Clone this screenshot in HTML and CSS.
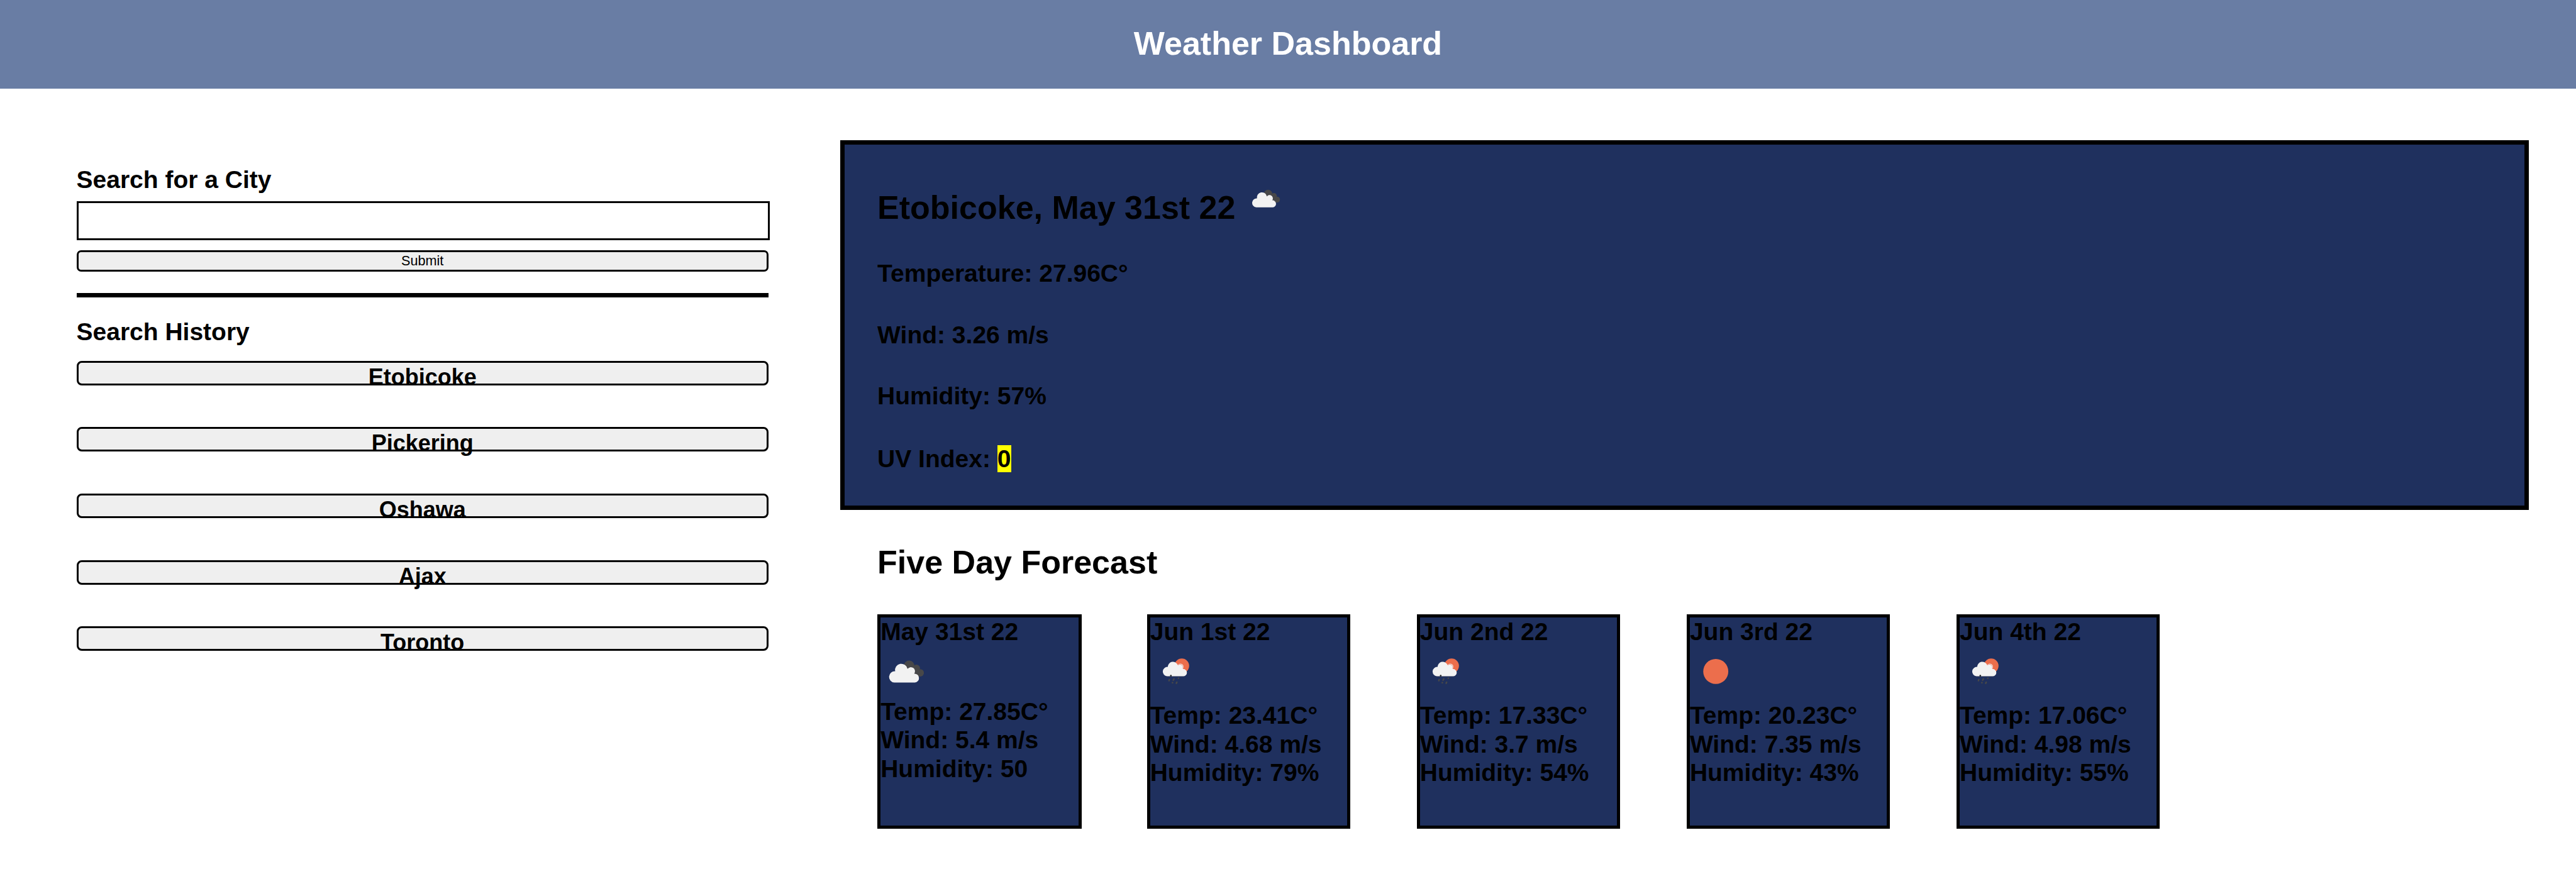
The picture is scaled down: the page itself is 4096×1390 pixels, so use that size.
FILE: index.html
```html
<!DOCTYPE html>
<html lang="en">
<head>
<meta charset="utf-8">
<title>Weather Dashboard</title>
<link rel="stylesheet" href="styles.css">
</head>
<body>
<svg class="sprite" aria-hidden="true">
  <symbol id="clouds" viewBox="0 0 300 300">
    <g fill="#484849"><circle cx="168" cy="118" r="31"/><circle cx="211" cy="132" r="21"/><circle cx="233" cy="159" r="22"/><path d="M150 130L190 110L240 150L230 181L200 175Z"/></g>
    <path d="M81 216a33 33 0 0 1 5-66a37 37 0 0 1 73-14a24 24 0 0 1 39 28a26 26 0 0 1 4 52z" fill="#f2f2f2" stroke="#2c2c36" stroke-width="3" stroke-linejoin="round" clip-path="url(#edge)"/>
    <path d="M81 216a33 33 0 0 1 5-66a37 37 0 0 1 73-14a24 24 0 0 1 39 28a26 26 0 0 1 4 52z" fill="#f2f2f2"/>
  </symbol>
  <clipPath id="edge"><path d="M142 100H215V163H142Z"/></clipPath>
  <symbol id="rain" viewBox="0 0 300 300">
    <circle cx="185" cy="118" r="43" fill="#ec6e4c"/>
    <path d="M99 179a27 27 0 0 1 4-55a30 30 0 0 1 58-11a19 19 0 0 1 31 23a21 21 0 0 1 3 43z" fill="#f2f2f2"/>
    <path d="M162 113a19 19 0 0 1 30 21a21 21 0 0 1 20 12" fill="none" stroke="#f04e30" stroke-width="2"/>
    <path d="M99 179H196" stroke="#8a8a90" stroke-width="2"/>
    <path d="M112 199L110 205M139 195L135 202M166 190L165 191M130 217L131 217M156 214L153 220" fill="none" stroke="#484849" stroke-width="9" stroke-linecap="round"/>
    <circle cx="121" cy="176" r="5" fill="#222"/>
  </symbol>
  <symbol id="sun" viewBox="0 0 300 300"><circle cx="152" cy="151" r="73.5" fill="#ec6e4c"/></symbol>
</svg>
<header class="header"><h1>Weather Dashboard</h1></header>
<main class="layout">
  <aside class="sidebar">
    <h2 class="label">Search for a City</h2>
    <input class="city" type="text" aria-label="City">
    <button class="submit">Submit</button>
    <div class="rule"></div>
    <h2 class="label">Search History</h2>
    <ul class="history">
      <li>Etobicoke</li>
      <li>Pickering</li>
      <li>Oshawa</li>
      <li>Ajax</li>
      <li>Toronto</li>
    </ul>
  </aside>
  <section class="content">
    <div class="current">
      <h2>Etobicoke, May 31st 22 <svg class="now-icon"><use href="#clouds"/></svg></h2>
      <p>Temperature: 27.96C°</p>
      <p>Wind: 3.26 m/s</p>
      <p>Humidity: 57%</p>
      <p>UV Index: <span class="uv">0</span></p>
    </div>
    <h2 class="forecast-title">Five Day Forecast</h2>
    <div class="forecast">
      <article class="card tight"><p>May 31st 22</p><svg><use href="#clouds"/></svg><p>Temp: 27.85C°</p><p>Wind: 5.4 m/s</p><p>Humidity: 50</p></article>
      <article class="card"><p>Jun 1st 22</p><svg><use href="#rain"/></svg><p>Temp: 23.41C°</p><p>Wind: 4.68 m/s</p><p>Humidity: 79%</p></article>
      <article class="card"><p>Jun 2nd 22</p><svg><use href="#rain"/></svg><p>Temp: 17.33C°</p><p>Wind: 3.7 m/s</p><p>Humidity: 54%</p></article>
      <article class="card"><p>Jun 3rd 22</p><svg><use href="#sun"/></svg><p>Temp: 20.23C°</p><p>Wind: 7.35 m/s</p><p>Humidity: 43%</p></article>
      <article class="card"><p>Jun 4th 22</p><svg><use href="#rain"/></svg><p>Temp: 17.06C°</p><p>Wind: 4.98 m/s</p><p>Humidity: 55%</p></article>
    </div>
  </section>
</main>
</body>
</html>
```
FILE: styles.css
```css
* { box-sizing: border-box; }
html { overflow: hidden; }
body {
  margin: 0;
  height: 1390px;
  background: #fff;
  color: #000;
  font: bold 39px/45px "Liberation Sans", Arial, sans-serif;
}
h1, h2, p, ul { margin: 0; padding: 0; font-weight: bold; }
.sprite { display: block; width: 0; height: 0; }

.header {
  height: 141.4px;
  background: #697da4;
  color: #fff;
  text-align: center;
}
.header h1 { font-size: 52px; line-height: 139.4px; }

.layout { display: flex; }

.sidebar {
  width: 1336.1px;
  padding: 121.4px 233.6px 0 121.5px;
}
.label { font-size: 39px; line-height: 45px; }
.city {
  display: block;
  width: 1102px;
  height: 61.8px;
  margin-top: 12.4px;
  padding: 0 8px;
  border: 3px solid #000;
  border-radius: 0;
  background: #fff;
}
.submit {
  display: block;
  width: 1100.4px;
  height: 34.1px;
  margin-top: 16.2px;
  padding: 0;
  border: 3px solid #000;
  border-radius: 7px;
  background: #efefef;
  color: #000;
  font: 21.67px/24px "Liberation Sans", Arial, sans-serif;
}
.rule {
  width: 1100.4px;
  height: 6.5px;
  margin: 34.1px 0 32.3px;
  background: #000;
}
.history {
  display: grid;
  gap: 66.65px;
  width: 1100.4px;
  margin-top: 23.5px;
  list-style: none;
}
.history li {
  height: 39px;
  border: 3px solid #000;
  border-radius: 8px;
  background: #efefef;
  font-size: 36px;
  line-height: 45px;
  text-align: center;
}

.content { padding-top: 81.3px; }
.current {
  width: 2685px;
  height: 588.4px;
  padding: 53px 52px 0;
  border: 7px solid #000;
  background: #1f305e;
}
.current h2 { font-size: 52px; line-height: 60px; }
.current p { margin-top: 52.6px; }
.current p:last-child { margin-top: 54.2px; }
.now-icon { width: 65px; height: 65px; margin-left: 1px; vertical-align: baseline; }
.uv { background: #ff0; }

.forecast-title {
  margin: 52.7px 0 53px 59px;
  font-size: 52px;
  line-height: 60px;
}
.forecast { display: flex; gap: 105.6px; margin-left: 58.5px; }
.card {
  width: 323.5px;
  height: 341.3px;
  border: 5px solid #000;
  background: #1f305e;
  line-height: 45.5px;
}
.card svg { display: block; width: 81.3px; height: 81.3px; margin-bottom: 6.5px; }
.card.tight { width: 325px; margin-right: -1.5px; padding-left: 0.6px; }
.card.tight svg { margin-bottom: 0; }
```
